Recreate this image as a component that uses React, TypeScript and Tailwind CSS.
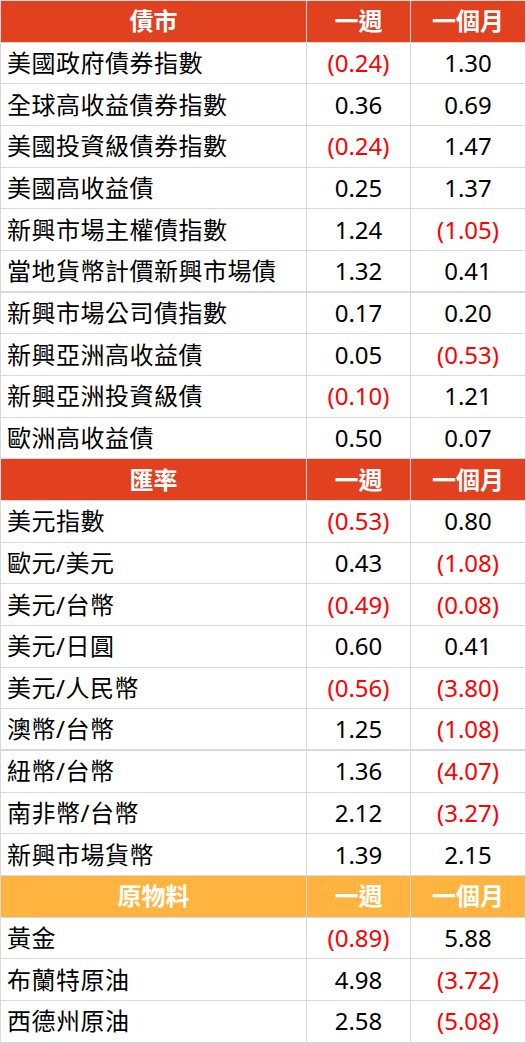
import React from "react";

type Row = [string, string, string];
type Section = { title: string; color: "red" | "orange"; rows: Row[]; thickAfter?: number };

const sections: Section[] = [
  {
    title: "債市",
    color: "red",
    thickAfter: 5,
    rows: [
      ["美國政府債券指數", "(0.24)", "1.30"],
      ["全球高收益債券指數", "0.36", "0.69"],
      ["美國投資級債券指數", "(0.24)", "1.47"],
      ["美國高收益債", "0.25", "1.37"],
      ["新興市場主權債指數", "1.24", "(1.05)"],
      ["當地貨幣計價新興市場債", "1.32", "0.41"],
      ["新興市場公司債指數", "0.17", "0.20"],
      ["新興亞洲高收益債", "0.05", "(0.53)"],
      ["新興亞洲投資級債", "(0.10)", "1.21"],
      ["歐洲高收益債", "0.50", "0.07"],
    ],
  },
  {
    title: "匯率",
    color: "red",
    thickAfter: 5,
    rows: [
      ["美元指數", "(0.53)", "0.80"],
      ["歐元/美元", "0.43", "(1.08)"],
      ["美元/台幣", "(0.49)", "(0.08)"],
      ["美元/日圓", "0.60", "0.41"],
      ["美元/人民幣", "(0.56)", "(3.80)"],
      ["澳幣/台幣", "1.25", "(1.08)"],
      ["紐幣/台幣", "1.36", "(4.07)"],
      ["南非幣/台幣", "2.12", "(3.27)"],
      ["新興市場貨幣", "1.39", "2.15"],
    ],
  },
  {
    title: "原物料",
    color: "orange",
    rows: [
      ["黃金", "(0.89)", "5.88"],
      ["布蘭特原油", "4.98", "(3.72)"],
      ["西德州原油", "2.58", "(5.08)"],
    ],
  },
];

const font = { fontFamily: '"Noto Sans", "Noto Sans CJK TC", sans-serif' };

function Num({ v }: { v: string }) {
  const neg = v.startsWith("(");
  return <span className={neg ? "text-[#ff0000]" : "text-black"}>{v}</span>;
}

export default function App() {
  return (
    <div className="w-[526px] h-[1043px] bg-white border-t border-l border-[#d9d9d9] text-[24px] leading-none" style={font}>
      {sections.map((s) => {
        const bg = s.color === "red" ? "bg-[#e1411e]" : "bg-[#ffb43f]";
        return (
          <div key={s.title}>
            <div className={`grid grid-cols-[306px_104px_115px] h-[41.68px] text-white font-bold ${bg}`}>
              <div className="flex items-center justify-center border-r border-b border-[#d9d9d9]">{s.title}</div>
              <div className="flex items-center justify-center border-r border-b border-[#d9d9d9]">一週</div>
              <div className="flex items-center justify-center border-r border-b border-[#d9d9d9]">一個月</div>
            </div>
            {s.rows.map((r, i) => {
              const thick = s.thickAfter === i;
              const b = thick ? "border-b-2 border-[#d9d9d9]" : "border-b border-[#d9d9d9]";
              return (
                <div key={r[0]} className="grid grid-cols-[306px_104px_115px] h-[41.68px] text-black font-normal">
                  <div className={`flex items-center pl-[6px] tracking-[0.5px] border-r ${b}`}>{r[0]}</div>
                  <div className={`flex items-center justify-center border-r ${b}`}>
                    <Num v={r[1]} />
                  </div>
                  <div className={`flex items-center justify-center border-r ${b}`}>
                    <Num v={r[2]} />
                  </div>
                </div>
              );
            })}
          </div>
        );
      })}
    </div>
  );
}
